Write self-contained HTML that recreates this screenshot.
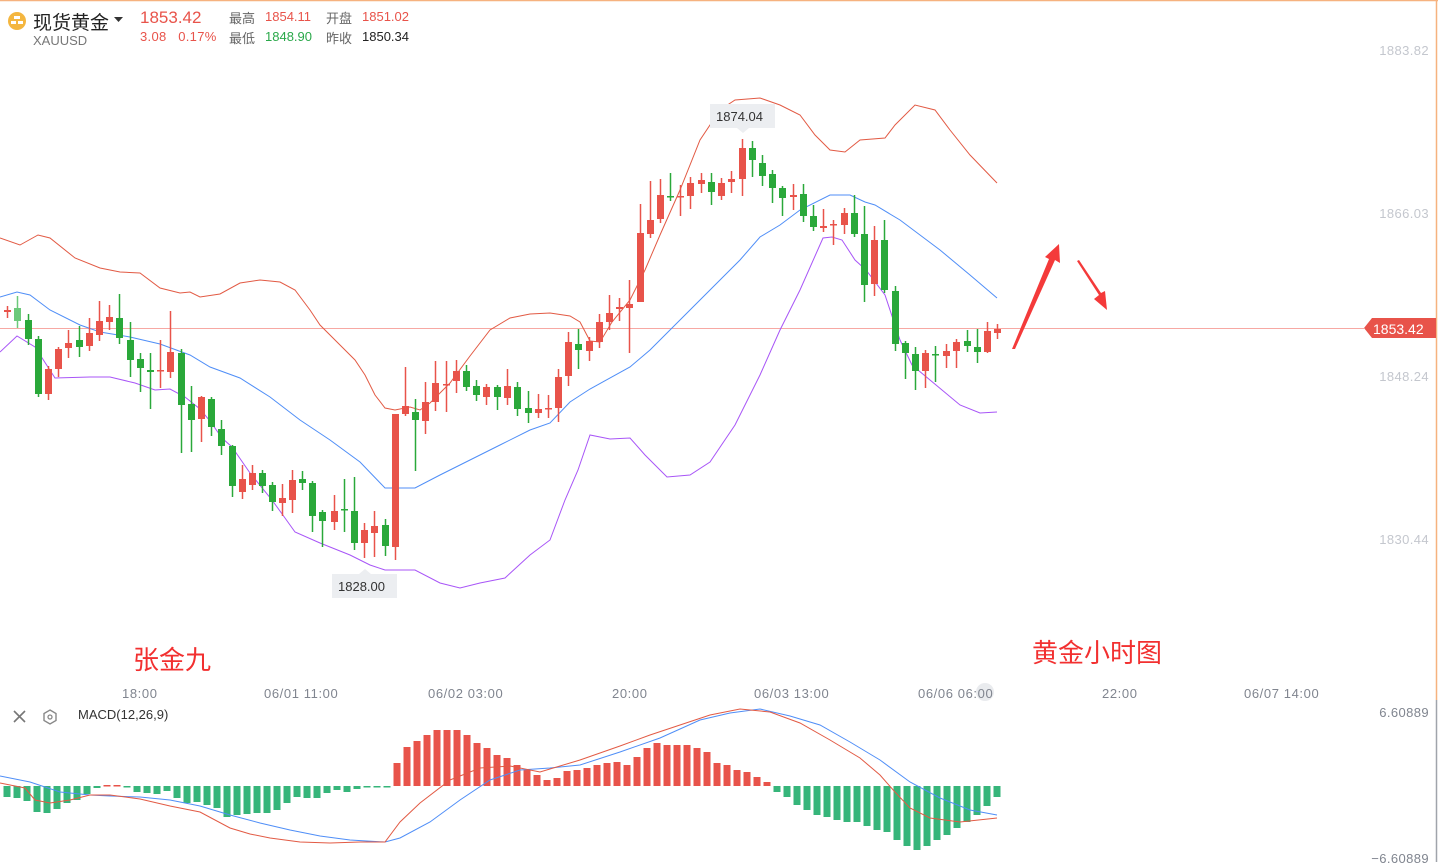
<!DOCTYPE html>
<html><head><meta charset="utf-8"><style>
html,body{margin:0;padding:0;background:#fff;}
body{width:1438px;height:862px;position:relative;overflow:hidden;font-family:"Liberation Sans","Noto Sans CJK SC",sans-serif;}
.t{position:absolute;white-space:nowrap;}
.ax{font-size:13px;color:#80858f;letter-spacing:0.6px;top:686px;}
.ra{right:9px;font-size:13px;color:#c4c7ce;letter-spacing:0.4px;}
</style></head><body>
<svg width="1438" height="862" style="position:absolute;left:0;top:0" xmlns="http://www.w3.org/2000/svg">
<line x1="0" y1="0.5" x2="1438" y2="0.5" stroke="#f6b27f" stroke-width="1.5"/>
<line x1="1436.5" y1="0" x2="1436.5" y2="700" stroke="#f6b27f" stroke-width="1.5"/>
<line x1="1436.5" y1="700" x2="1436.5" y2="862" stroke="#a0a4ab" stroke-width="1.5"/>
<circle cx="17" cy="21" r="9" fill="#f4b63f"/>
<rect x="14" y="16" width="6" height="3" fill="#fff"/><rect x="11" y="21" width="5" height="3" fill="#fff"/><rect x="18" y="21" width="5" height="3" fill="#fff"/>
<path d="M114 17 L123 17 L118.5 22 Z" fill="#333"/>
<line x1="0" y1="328.5" x2="1364" y2="328.5" stroke="#f7a8a3" stroke-width="1"/>
<path d="M1364 328 L1372 318 L1436 318 L1436 338 L1372 338 Z" fill="#e8534a"/>
<polyline fill="none" stroke="#e25a44" stroke-width="1" points="0,238 20,245 38,235 50,238 75,258 100,268 120,272 140,273 160,288 180,293 190,292 200,297 220,294 240,283 260,280 280,282 295,290 310,310 320,325 340,345 355,360 365,375 375,395 385,408 395,410 410,407 420,410 430,403 450,383 470,356 490,330 510,318 530,314 550,313 570,316 580,322 590,341 600,342 612,322 630,300 645,270 660,235 680,190 700,140 720,110 735,100 760,98 780,105 800,115 815,135 830,150 845,152 860,140 885,138 895,125 915,105 935,110 950,130 970,155 997,183"/>
<polyline fill="none" stroke="#4f8ef7" stroke-width="1" points="0,297 17,292 30,295 50,310 80,325 100,332 130,337 160,344 190,355 210,367 240,378 270,397 300,420 330,440 360,462 385,488 415,488 440,475 460,465 500,445 530,430 550,423 570,402 590,389 630,367 650,350 680,320 720,280 740,260 760,237 780,225 800,210 830,195 850,195 865,202 875,205 900,220 940,250 970,275 997,298"/>
<polyline fill="none" stroke="#a855f7" stroke-width="1" points="0,352 17,336 35,347 55,378 90,377 110,377 135,383 155,390 170,389 185,397 200,409 210,421 222,438 232,447 250,473 272,500 285,518 295,532 320,543 350,555 370,565 385,570 415,570 440,583 460,588 480,583 505,578 530,555 550,540 565,500 578,470 590,435 610,439 630,438 645,455 667,477 690,475 710,462 735,425 760,375 780,330 800,290 823,238 832,237 842,240 855,260 866,270 885,295 900,340 912,365 930,380 960,405 980,413 997,412"/>
<g id="c"></g>
<path d="M710 104 h65 v24 h-26 l-6 5 l-6 -5 h-27 Z" fill="#eceef1"/>
<path d="M332 598 h65 v-24 h-26 l-6 -5 l-6 5 h-27 Z" fill="#eceef1"/>
<polygon fill="#f43a3a" points="1012,349 1049,259 1045,257 1059,244 1060,263 1055,260 1015,349"/>
<polygon fill="#f43a3a" points="1077,261 1099,295 1094,299 1107,310 1105,291 1101,293 1079,260"/>
<g id="m"></g>
<polyline fill="none" stroke="#4f8ef7" stroke-width="1" points="0,776 30,782 60,792 90,795 110,796 140,797 170,800 200,806 230,815 260,823 290,830 320,836 350,840 385,842 400,838 430,822 460,800 490,780 520,770 550,768 580,765 620,752 660,738 700,720 730,713 760,709 790,716 820,725 850,742 880,760 910,782 940,798 970,810 997,815"/>
<polyline fill="none" stroke="#e25a44" stroke-width="1" points="0,783 25,788 35,800 50,803 70,800 90,795 110,795 140,799 170,806 200,812 230,828 250,834 270,838 300,842 330,843 360,842 385,842 400,822 420,803 450,780 480,768 510,766 540,772 580,760 620,746 650,735 680,725 710,715 740,709 770,712 800,723 830,740 860,758 880,775 895,792 910,808 930,818 960,822 997,818"/>
<path d="M14 711 L25 722 M25 711 L14 722" stroke="#777" stroke-width="1.6"/>
<polygon points="50,710 56,713.5 56,720.5 50,724 44,720.5 44,713.5" fill="none" stroke="#888" stroke-width="1.4"/><circle cx="50" cy="717" r="2" fill="none" stroke="#888" stroke-width="1.3"/>
<circle cx="985" cy="692" r="9" fill="#e4e6ea" opacity="0.8"/>
</svg>
<div class="t" style="left:33px;top:8px;font-size:19px;color:#222">现货黄金</div>
<div class="t" style="left:33px;top:33px;font-size:13px;color:#777">XAUUSD</div>
<div class="t" style="left:140px;top:8px;font-size:17px;color:#e8534a">1853.42</div>
<div class="t" style="left:140px;top:29px;font-size:13px;color:#e8534a;letter-spacing:0.3px">3.08&nbsp;&nbsp;&nbsp;0.17%</div>
<div class="t" style="left:229px;top:8px;font-size:13px;color:#666">最高</div>
<div class="t" style="left:265px;top:9px;font-size:13px;color:#e8534a">1854.11</div>
<div class="t" style="left:326px;top:8px;font-size:13px;color:#666">开盘</div>
<div class="t" style="left:362px;top:9px;font-size:13px;color:#e8534a">1851.02</div>
<div class="t" style="left:229px;top:28px;font-size:13px;color:#666">最低</div>
<div class="t" style="left:265px;top:29px;font-size:13px;color:#2aa84a">1848.90</div>
<div class="t" style="left:326px;top:28px;font-size:13px;color:#666">昨收</div>
<div class="t" style="left:362px;top:29px;font-size:13px;color:#222">1850.34</div>
<div class="t ra" style="top:43px">1883.82</div>
<div class="t ra" style="top:206px">1866.03</div>
<div class="t ra" style="top:369px">1848.24</div>
<div class="t ra" style="top:532px">1830.44</div>
<div class="t" style="left:1373px;top:321px;font-size:14px;color:#fff">1853.42</div>
<div class="t" style="left:716px;top:109px;font-size:13px;color:#333">1874.04</div>
<div class="t" style="left:338px;top:579px;font-size:13px;color:#333">1828.00</div>
<div class="t" style="left:133px;top:640px;font-size:26px;color:#f23030">张金九</div>
<div class="t" style="left:1032px;top:633px;font-size:26px;color:#f23030">黄金小时图</div>
<div class="t ax" style="left:122px">18:00</div>
<div class="t ax" style="left:264px">06/01 11:00</div>
<div class="t ax" style="left:428px">06/02 03:00</div>
<div class="t ax" style="left:612px">20:00</div>
<div class="t ax" style="left:754px">06/03 13:00</div>
<div class="t ax" style="left:918px">06/06 06:00</div>
<div class="t ax" style="left:1102px">22:00</div>
<div class="t ax" style="left:1244px">06/07 14:00</div>
<div class="t" style="left:78px;top:707px;font-size:13px;color:#333">MACD(12,26,9)</div>
<div class="t" style="right:9px;top:705px;font-size:13px;color:#80858f;letter-spacing:0.4px">6.60889</div>
<div class="t" style="right:9px;top:851px;font-size:13px;color:#80858f;letter-spacing:0.4px">−6.60889</div>
<script>
var R="#e8534a",G="#2aa83a";
var C=[[7,310,312,306,318,R],[17,308,321,296,328,"#6cc97a"],[28,320,339,314,345,G],[38,339,394,336,397,G],[48,369,394,366,400,R],[58,349,369,347,377,R],[68,343,348,330,358,R],[79,340,347,326,357,G],[89,333,346,318,351,R],[99,321,335,301,341,R],[109,317,322,305,330,R],[119,318,338,294,344,G],[130,340,360,322,377,G],[140,359,368,353,392,G],[150,370,372,353,409,G],[160,370,371,340,388,R],[170,352,372,311,378,R],[181,353,405,349,453,G],[191,404,420,386,452,G],[201,397,419,396,442,R],[211,399,427,397,436,G],[221,429,446,420,455,G],[232,446,486,445,497,G],[242,479,492,465,499,R],[252,473,485,465,490,R],[262,473,486,470,493,G],[272,485,502,482,511,G],[282,498,503,484,516,R],[292,480,500,470,513,R],[302,479,483,471,490,G],[312,483,516,481,532,G],[322,512,521,510,547,G],[334,511,522,495,530,R],[344,509,510,479,532,G],[354,511,543,477,550,G],[364,530,543,523,558,R],[374,526,533,511,557,R],[385,525,546,519,556,G],[395,414,547,414,560,R],[405,406,414,367,416,R],[415,412,420,399,471,G],[425,402,421,382,434,R],[435,383,402,361,411,R],[446,384,385,361,412,R],[456,371,381,360,393,R],[466,371,387,365,391,G],[476,386,395,380,401,G],[486,387,397,384,405,R],[497,387,397,385,410,G],[507,386,398,369,405,R],[517,387,409,382,416,G],[528,408,413,391,423,G],[538,409,413,394,418,R],[548,408,409,395,418,R],[558,377,408,369,422,R],[568,342,376,332,386,R],[578,344,350,329,369,G],[589,341,351,337,361,R],[599,322,342,314,348,R],[609,313,322,295,330,R],[619,307,309,298,321,R],[629,304,308,280,353,R],[640,233,302,204,302,R],[650,220,234,181,238,R],[660,195,219,179,223,R],[670,196,197,173,201,G],[680,196,197,185,216,R],[690,183,196,177,209,R],[701,180,184,173,193,R],[711,182,192,173,205,G],[721,183,196,178,200,R],[731,179,182,171,193,R],[742,148,179,139,196,R],[752,148,160,141,177,G],[762,163,176,155,186,G],[772,174,188,170,203,G],[782,188,198,186,216,G],[793,195,197,184,210,R],[803,194,216,184,222,G],[813,216,227,205,231,G],[823,226,228,209,232,R],[833,224,225,220,245,R],[844,213,225,208,234,R],[854,213,234,195,237,G],[864,234,285,206,302,G],[874,240,284,226,296,R],[884,240,290,220,293,G],[895,291,344,286,351,G],[905,343,353,341,379,G],[915,354,371,347,390,G],[925,353,371,350,388,R],[935,354,355,346,382,G],[946,351,356,344,368,R],[956,342,351,339,368,R],[967,341,346,330,352,G],[977,347,352,329,363,G],[987,331,352,322,353,R],[997,329,333,324,339,R]];
var s="";C.forEach(function(c){var h=Math.max(c[2]-c[1],1.5);s+='<line x1="'+(c[0]+.5)+'" y1="'+c[3]+'" x2="'+(c[0]+.5)+'" y2="'+c[4]+'" stroke="'+c[5]+'" stroke-width="1.5"/><rect x="'+(c[0]-3)+'" y="'+c[1]+'" width="7" height="'+h+'" fill="'+c[5]+'"/>';});
document.getElementById("c").innerHTML=s;
var M=[797,798,801,812,813,809,803,800,794,788,785,785,787,792,793,794,791,798,803,802,805,808,817,815,814,813,813,810,803,797,798,798,793,790,792,789,787,787,787,763,747,741,735,730,730,730,735,743,748,755,758,765,770,775,780,778,771,770,768,765,763,762,765,757,748,743,745,745,745,748,752,763,765,770,772,777,782,792,797,805,810,815,817,820,822,822,826,830,832,840,846,850,846,840,835,828,822,815,806,797];
var m="";for(var i=0;i<M.length;i++){var x=7+i*((997-7)/(M.length-1));var v=M[i];var col=(i>=39&&i<=76)||i==10||i==11?R:"#36b57a";if(col=="#36b57a"&&v<786)v=789;var y1=Math.min(v,786),h=Math.max(Math.abs(v-786),1.5);m+='<rect x="'+(x-3.5)+'" y="'+y1+'" width="7" height="'+h+'" fill="'+col+'"/>';}
document.getElementById("m").innerHTML=m;
</script>
</body></html>
